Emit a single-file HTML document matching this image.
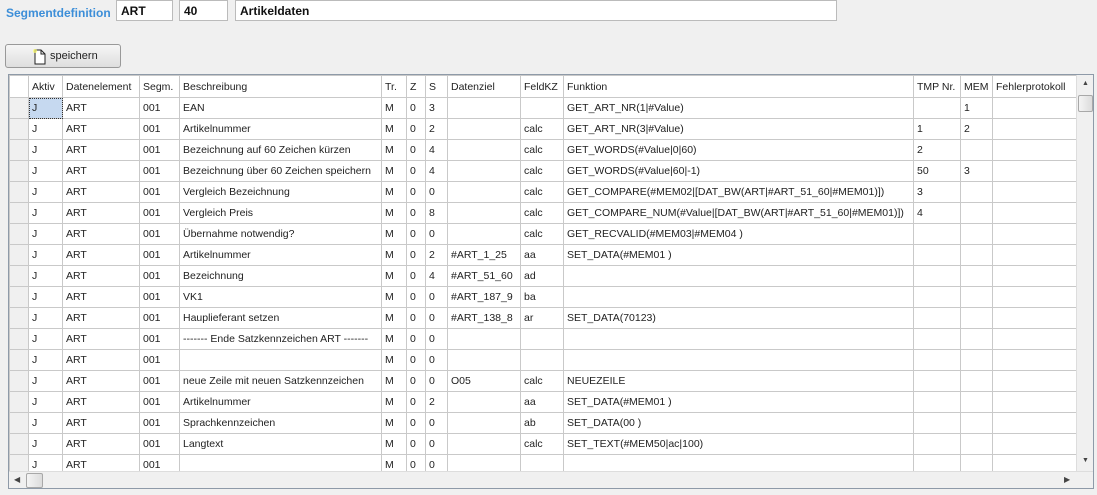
<!DOCTYPE html>
<html><head><meta charset="utf-8"><style>
*{box-sizing:border-box;margin:0;padding:0}
body{width:1097px;height:495px;background:#f0f0f0;font-family:"Liberation Sans",Tahoma,sans-serif;font-size:10.5px;color:#222;position:relative;overflow:hidden}
.lbl{position:absolute;left:6px;top:6px;color:#3c8ed8;font-weight:bold;font-size:12px}
.in{position:absolute;top:0;height:21px;background:#fff;border:1px solid #bbb;font-weight:bold;font-size:12px;padding:3px 4px;color:#111}
.btn{position:absolute;left:5px;top:44px;width:116px;height:24px;border:1px solid #999;border-radius:3px;background:linear-gradient(#f6f6f6,#dedede);font-size:11px;padding:5px 0 0 44px}
.btn svg{position:absolute;left:27px;top:4px}
.grid{position:absolute;left:8px;top:74px;width:1086px;height:415px;border:1px solid #8e9aa8;background:#fff;overflow:hidden}
table{position:absolute;left:0;top:0;border-collapse:collapse;table-layout:fixed;width:1067px}
td{height:21px;border:1px solid #c9c9c9;padding:0 0 0 3px;white-space:nowrap;overflow:hidden;vertical-align:middle}
tr.h td{height:22px;background:#fff}
td.rh{background:#f0f0f0;border-color:#c9c9c9}
.sel{background:#c6d9f0;outline:1px dotted #333;outline-offset:-1px}
.vs{position:absolute;left:1067px;top:0;width:17px;height:396px;background:#f0f0f0;border-left:1px solid #ddd}
.hs{position:absolute;left:0;top:396px;width:1084px;height:17px;background:#f0f0f0;border-top:1px solid #ddd}
.thumb{position:absolute;background:linear-gradient(90deg,#f4f4f4,#dcdcdc);border:1px solid #a8a8a8;border-radius:2px}
</style></head><body>
<div class="lbl">Segmentdefinition</div>
<div class="in" style="left:116px;width:57px">ART</div>
<div class="in" style="left:179px;width:49px">40</div>
<div class="in" style="left:235px;width:602px">Artikeldaten</div>
<div class="btn"><svg width="14" height="16" viewBox="0 0 14 16"><path d="M2 1h6l4 4v10H2z" fill="#fff" stroke="#222"/><path d="M8 1v4h4" fill="none" stroke="#222"/><circle cx="2" cy="2" r="2" fill="#ff6" opacity=".7"/></svg>speichern</div>
<div class="grid">
<table>
<colgroup><col style="width:19px"><col style="width:34px"><col style="width:77px"><col style="width:40px"><col style="width:202px"><col style="width:25px"><col style="width:19px"><col style="width:22px"><col style="width:73px"><col style="width:43px"><col style="width:350px"><col style="width:47px"><col style="width:32px"><col style="width:84px"></colgroup>
<tr class="h"><td class="rh" style="background:#fff"></td><td>Aktiv</td><td>Datenelement</td><td>Segm.</td><td>Beschreibung</td><td>Tr.</td><td>Z</td><td>S</td><td>Datenziel</td><td>FeldKZ</td><td>Funktion</td><td>TMP Nr.</td><td>MEM</td><td>Fehlerprotokoll</td></tr>
<tr><td class="rh"></td><td class="sel">J</td><td>ART</td><td>001</td><td>EAN</td><td>M</td><td>0</td><td>3</td><td></td><td></td><td>GET_ART_NR(1|#Value)</td><td></td><td>1</td><td></td></tr>
<tr><td class="rh"></td><td>J</td><td>ART</td><td>001</td><td>Artikelnummer</td><td>M</td><td>0</td><td>2</td><td></td><td>calc</td><td>GET_ART_NR(3|#Value)</td><td>1</td><td>2</td><td></td></tr>
<tr><td class="rh"></td><td>J</td><td>ART</td><td>001</td><td>Bezeichnung auf 60 Zeichen kürzen</td><td>M</td><td>0</td><td>4</td><td></td><td>calc</td><td>GET_WORDS(#Value|0|60)</td><td>2</td><td></td><td></td></tr>
<tr><td class="rh"></td><td>J</td><td>ART</td><td>001</td><td>Bezeichnung über 60 Zeichen speichern</td><td>M</td><td>0</td><td>4</td><td></td><td>calc</td><td>GET_WORDS(#Value|60|-1)</td><td>50</td><td>3</td><td></td></tr>
<tr><td class="rh"></td><td>J</td><td>ART</td><td>001</td><td>Vergleich Bezeichnung</td><td>M</td><td>0</td><td>0</td><td></td><td>calc</td><td>GET_COMPARE(#MEM02|[DAT_BW(ART|#ART_51_60|#MEM01)])</td><td>3</td><td></td><td></td></tr>
<tr><td class="rh"></td><td>J</td><td>ART</td><td>001</td><td>Vergleich Preis</td><td>M</td><td>0</td><td>8</td><td></td><td>calc</td><td>GET_COMPARE_NUM(#Value|[DAT_BW(ART|#ART_51_60|#MEM01)])</td><td>4</td><td></td><td></td></tr>
<tr><td class="rh"></td><td>J</td><td>ART</td><td>001</td><td>Übernahme notwendig?</td><td>M</td><td>0</td><td>0</td><td></td><td>calc</td><td>GET_RECVALID(#MEM03|#MEM04 )</td><td></td><td></td><td></td></tr>
<tr><td class="rh"></td><td>J</td><td>ART</td><td>001</td><td>Artikelnummer</td><td>M</td><td>0</td><td>2</td><td>#ART_1_25</td><td>aa</td><td>SET_DATA(#MEM01 )</td><td></td><td></td><td></td></tr>
<tr><td class="rh"></td><td>J</td><td>ART</td><td>001</td><td>Bezeichnung</td><td>M</td><td>0</td><td>4</td><td>#ART_51_60</td><td>ad</td><td></td><td></td><td></td><td></td></tr>
<tr><td class="rh"></td><td>J</td><td>ART</td><td>001</td><td>VK1</td><td>M</td><td>0</td><td>0</td><td>#ART_187_9</td><td>ba</td><td></td><td></td><td></td><td></td></tr>
<tr><td class="rh"></td><td>J</td><td>ART</td><td>001</td><td>Hauplieferant setzen</td><td>M</td><td>0</td><td>0</td><td>#ART_138_8</td><td>ar</td><td>SET_DATA(70123)</td><td></td><td></td><td></td></tr>
<tr><td class="rh"></td><td>J</td><td>ART</td><td>001</td><td>------- Ende Satzkennzeichen ART -------</td><td>M</td><td>0</td><td>0</td><td></td><td></td><td></td><td></td><td></td><td></td></tr>
<tr><td class="rh"></td><td>J</td><td>ART</td><td>001</td><td></td><td>M</td><td>0</td><td>0</td><td></td><td></td><td></td><td></td><td></td><td></td></tr>
<tr><td class="rh"></td><td>J</td><td>ART</td><td>001</td><td>neue Zeile mit neuen Satzkennzeichen</td><td>M</td><td>0</td><td>0</td><td>O05</td><td>calc</td><td>NEUEZEILE</td><td></td><td></td><td></td></tr>
<tr><td class="rh"></td><td>J</td><td>ART</td><td>001</td><td>Artikelnummer</td><td>M</td><td>0</td><td>2</td><td></td><td>aa</td><td>SET_DATA(#MEM01 )</td><td></td><td></td><td></td></tr>
<tr><td class="rh"></td><td>J</td><td>ART</td><td>001</td><td>Sprachkennzeichen</td><td>M</td><td>0</td><td>0</td><td></td><td>ab</td><td>SET_DATA(00 )</td><td></td><td></td><td></td></tr>
<tr><td class="rh"></td><td>J</td><td>ART</td><td>001</td><td>Langtext</td><td>M</td><td>0</td><td>0</td><td></td><td>calc</td><td>SET_TEXT(#MEM50|ac|100)</td><td></td><td></td><td></td></tr>
<tr><td class="rh"></td><td>J</td><td>ART</td><td>001</td><td></td><td>M</td><td>0</td><td>0</td><td></td><td></td><td></td><td></td><td></td><td></td></tr>
</table>
<div class="vs"><div style="position:absolute;left:5px;top:5px;font-size:7px;color:#444">▲</div><div class="thumb" style="left:1px;top:20px;width:15px;height:17px"></div><div style="position:absolute;left:5px;top:382px;font-size:7px;color:#444">▼</div></div>
<div class="hs"><div style="position:absolute;left:5px;top:3px;font-size:8px;color:#444">◀</div><div class="thumb" style="left:17px;top:1px;width:17px;height:15px"></div><div style="position:absolute;left:1055px;top:3px;font-size:8px;color:#444">▶</div></div>
</div>
</body></html>
